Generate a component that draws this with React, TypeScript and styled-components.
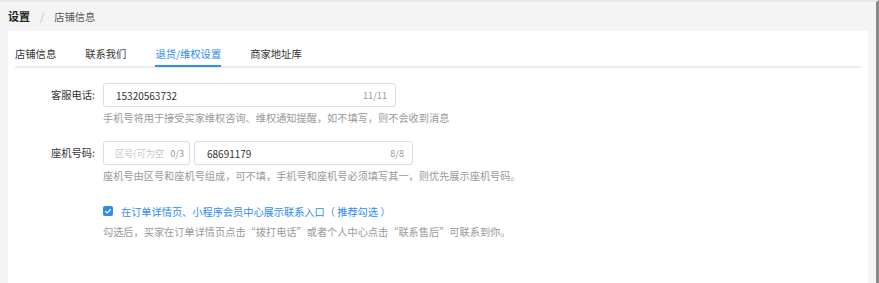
import React from "react";
import styled, { createGlobalStyle } from "styled-components";

const Global = createGlobalStyle`
  html, body { margin: 0; padding: 0; background: #f5f5f5; }
  body { font-family: "Noto Sans CJK SC", "Noto Sans", sans-serif; color: #333; }
`;

const Page = styled.div`
  width: 879px;
  height: 283px;
  border-top: 2px solid #e9e9e9;
  border-right: 3px solid #8a8a8a;
  box-sizing: border-box;
  background: #f4f4f4;
  padding: 0 8px;
  overflow: hidden;
`;

const Breadcrumb = styled.div`
  height: 29px;
  display: flex;
  align-items: center;
  gap: 8px;
  font-size: 10.5px;
  color: #666;
  padding-bottom: 1px;
  box-sizing: border-box;
`;

const Crumb = styled.span<{ $strong?: boolean }>`
  color: ${(p) => (p.$strong ? "#222" : "#555")};
  font-weight: ${(p) => (p.$strong ? 700 : 400)};
  font-size: ${(p) => (p.$strong ? "11px" : "10.3px")};
`;

const Sep = styled.span`
  color: #bbb;
  margin: 0 2px;
`;

const Card = styled.div`
  background: #fff;
  height: 260px;
  padding: 10px 7px 0;
`;

const Tabs = styled.div`
  display: flex;
  gap: 29px;
  border-bottom: 2px solid #ececec;
  height: 25px;
`;

const Tab = styled.div<{ $active?: boolean }>`
  font-size: 10.3px;
  line-height: 25px;
  color: ${(p) => (p.$active ? "#2d8cf0" : "#333")};
  position: relative;
  &::after {
    content: "";
    display: ${(p) => (p.$active ? "block" : "none")};
    position: absolute;
    left: 0;
    right: 0;
    bottom: -1px;
    height: 2px;
    background: #2d8cf0;
  }
`;

const Form = styled.div`
  padding-top: 15px;
  display: flex;
  flex-direction: column;
`;

const Row = styled.div<{ $mt?: number }>`
  display: grid;
  grid-template-columns: 80px 1fr;
  column-gap: 8px;
  margin-top: ${(p) => p.$mt ?? 0}px;
`;

const Label = styled.div`
  text-align: right;
  font-size: 10.3px;
  color: #333;
  line-height: 24px;
  height: 24px;
`;

const Field = styled.div`
  display: flex;
  flex-direction: column;
`;

const Inputs = styled.div`
  display: flex;
  gap: 4px;
`;

const InputBox = styled.div<{ $w: number; $tight?: boolean }>`
  width: ${(p) => p.$w}px;
  height: 24px;
  box-sizing: border-box;
  border: 1px solid #dcdee2;
  border-radius: 3px;
  display: flex;
  align-items: center;
  padding: ${(p) => (p.$tight ? "0 5px 0 11px" : "0 8px 0 12px")};
  gap: 3px;
`;

const Value = styled.span<{ $placeholder?: boolean }>`
  flex: 1;
  min-width: 0;
  font-size: ${(p) => (p.$placeholder ? "9.2px" : "10px")};
  color: ${(p) => (p.$placeholder ? "#c5c8ce" : "#333")};
  white-space: nowrap;
  overflow: hidden;
`;

const Count = styled.span`
  font-size: 9.2px;
  color: #999;
  flex-shrink: 0;
`;

const Hint = styled.div`
  font-size: 10.2px;
  color: #999;
  line-height: 20px;
  margin-top: 1px;
  white-space: nowrap;
`;

const CheckLine = styled.label`
  display: flex;
  align-items: center;
  gap: 8px;
  height: 20px;
  font-size: 10.2px;
  color: #2d8cf0;
`;

const CheckBox = styled.span`
  width: 10px;
  height: 10px;
  border-radius: 2px;
  background: #2d8cf0;
  display: inline-flex;
  align-items: center;
  justify-content: center;
`;

export default function App() {
  return (
    <>
      <Global />
      <Page>
        <Breadcrumb>
          <Crumb $strong>设置</Crumb>
          <Sep>/</Sep>
          <Crumb>店铺信息</Crumb>
        </Breadcrumb>
        <Card>
          <Tabs>
            <Tab>店铺信息</Tab>
            <Tab>联系我们</Tab>
            <Tab $active>退货/维权设置</Tab>
            <Tab>商家地址库</Tab>
          </Tabs>
          <Form>
            <Row>
              <Label>客服电话:</Label>
              <Field>
                <InputBox $w={293}>
                  <Value>15320563732</Value>
                  <Count>11/11</Count>
                </InputBox>
                <Hint>手机号将用于接受买家维权咨询、维权通知提醒，如不填写，则不会收到消息</Hint>
              </Field>
            </Row>
            <Row $mt={13}>
              <Label>座机号码:</Label>
              <Field>
                <Inputs>
                  <InputBox $w={87} $tight>
                    <Value $placeholder>区号(可为空</Value>
                    <Count>0/3</Count>
                  </InputBox>
                  <InputBox $w={219}>
                    <Value>68691179</Value>
                    <Count>8/8</Count>
                  </InputBox>
                </Inputs>
                <Hint>座机号由区号和座机号组成，可不填，手机号和座机号必须填写其一，则优先展示座机号码。</Hint>
              </Field>
            </Row>
            <Row $mt={15}>
              <div />
              <Field>
                <CheckLine>
                  <CheckBox>
                    <svg width="8" height="8" viewBox="0 0 8 8">
                      <path d="M1.3 4.1 L3.2 5.9 L6.7 2.2" fill="none" stroke="#fff" strokeWidth="1.3" />
                    </svg>
                  </CheckBox>
                  在订单详情页、小程序会员中心展示联系入口（ 推荐勾选 ）
                </CheckLine>
                <Hint>勾选后，买家在订单详情页点击“拨打电话”或者个人中心点击“联系售后”可联系到你。</Hint>
              </Field>
            </Row>
          </Form>
        </Card>
      </Page>
    </>
  );
}
